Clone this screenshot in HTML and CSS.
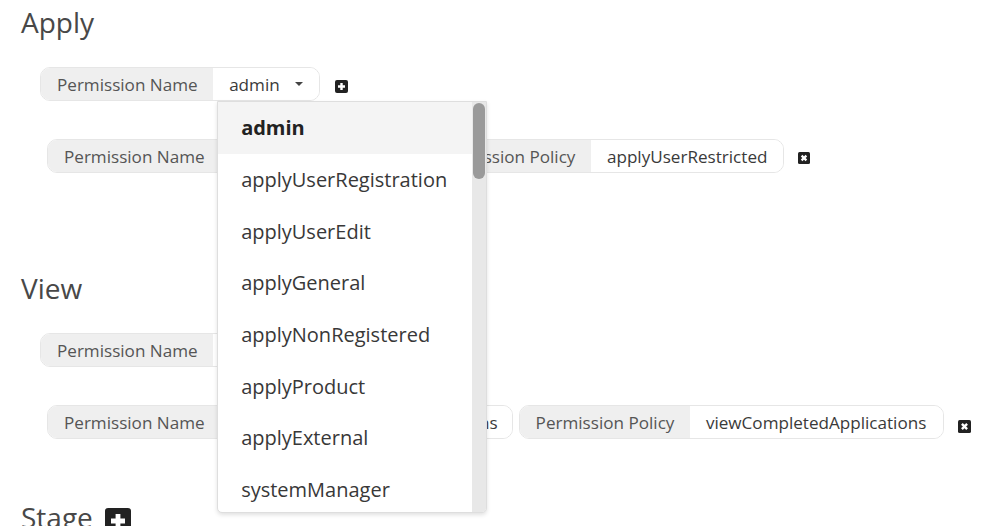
FILE: index.html
```html
<!DOCTYPE html>
<html>
<head>
<meta charset="utf-8">
<link rel="stylesheet" href="styles.css">
</head>
<body>
<section class="section">
  <h2 class="title">Apply</h2>
  <div class="row row-add">
    <div class="field">
      <span class="label">Permission Name</span>
      <div class="value dropdown">
        <span>admin</span><span class="caret"></span>
        <div class="menu">
          <ul class="items">
            <li class="item selected">admin</li>
            <li class="item">applyUserRegistration</li>
            <li class="item">applyUserEdit</li>
            <li class="item">applyGeneral</li>
            <li class="item">applyNonRegistered</li>
            <li class="item">applyProduct</li>
            <li class="item">applyExternal</li>
            <li class="item">systemManager</li>
          </ul>
          <div class="scrollbar"><div class="thumb"></div></div>
        </div>
      </div>
    </div>
    <svg class="icon icon-add" viewBox="0 0 13 13"><rect width="13" height="13" rx="2" fill="#222"/><path d="M6.5 3v7M3 6.5h7" stroke="#fff" stroke-width="2.4"/></svg>
  </div>
  <div class="row row-item">
    <div class="field">
      <span class="label">Permission Name</span>
      <span class="value">applyUserRestricted</span>
    </div>
    <div class="field">
      <span class="label">Permission Policy</span>
      <span class="value">applyUserRestricted</span>
    </div>
    <svg class="icon icon-remove" viewBox="0 0 12 12"><rect width="12" height="12" rx="1.5" fill="#222"/><path d="M3.6 3.6l4.8 4.8M8.4 3.6l-4.8 4.8" stroke="#fff" stroke-width="2.2"/></svg>
  </div>
</section>

<section class="section section-view">
  <h2 class="title">View</h2>
  <div class="row row-add">
    <div class="field">
      <span class="label">Permission Name</span>
      <span class="value">viewGeneral<span class="caret"></span></span>
    </div>
    <svg class="icon icon-add" viewBox="0 0 13 13"><rect width="13" height="13" rx="2" fill="#222"/><path d="M6.5 3v7M3 6.5h7" stroke="#fff" stroke-width="2.4"/></svg>
  </div>
  <div class="row row-item">
    <div class="field">
      <span class="label">Permission Name</span>
      <span class="value value-wide">viewOwnCompletedApplications</span>
    </div>
    <div class="field">
      <span class="label">Permission Policy</span>
      <span class="value value-policy">viewCompletedApplications</span>
    </div>
    <svg class="icon icon-remove icon-remove-far" viewBox="0 0 12 12"><rect width="12" height="12" rx="1.5" fill="#222"/><path d="M3.6 3.6l4.8 4.8M8.4 3.6l-4.8 4.8" stroke="#fff" stroke-width="2.2"/></svg>
  </div>
</section>

<section class="section section-stage">
  <h2 class="title">Stage <svg class="icon icon-title" viewBox="0 0 13 13"><rect width="13" height="13" rx="1.5" fill="#222"/><path d="M6.5 3v7M3 6.5h7" stroke="#fff" stroke-width="2.4"/></svg></h2>
</section>
</body>
</html>
```
FILE: styles.css
```css
html, body {
  height: 100%;
}
body {
  margin: 0;
  padding: 2px 21px 0;
  font-family: "Open Sans", "Noto Sans", sans-serif;
  color: #333;
  background: #fff;
  overflow: hidden;
  box-sizing: border-box;
}
.title {
  margin: 0;
  font-size: 28px;
  line-height: 40px;
  font-weight: 400;
  color: #484848;
  display: flex;
  align-items: center;
  gap: 12px;
}
.section-view {
  margin-top: 95px;
}
.section-stage {
  margin-top: 58px;
}
.row {
  display: flex;
  align-items: center;
}
.row-add {
  margin-top: 25px;
  margin-left: 19px;
}
.row-item {
  margin-top: 38px;
  margin-left: 26px;
  gap: 6px;
}
.field {
  display: flex;
  height: 34px;
  box-sizing: border-box;
  border: 1px solid #e6e6e6;
  border-radius: 10px;
  font-size: 17.1px;
}
.label {
  display: flex;
  align-items: center;
  padding: 0 15.5px 0 16px;
  background: #efefef;
  color: #555;
  border-radius: 9px 0 0 9px;
}
.value {
  display: flex;
  align-items: center;
  padding: 0 16px;
  background: #fff;
  color: #3a3a3a;
  border-radius: 0 9px 9px 0;
}
.value-wide {
  padding-left: 20px;
  padding-right: 14px;
}
.value-policy {
  padding-right: 17px;
}
.caret {
  width: 0;
  height: 0;
  margin-left: 15px;
  border-left: 4px solid transparent;
  border-right: 4px solid transparent;
  border-top: 4px solid #444;
}
.icon {
  display: block;
}
.icon-add {
  width: 13px;
  height: 13px;
  margin-left: 15px;
  margin-top: 5px;
}
.icon-remove {
  width: 12px;
  height: 12px;
  margin-left: 8px;
  margin-top: 4px;
}
.icon-remove-far {
  width: 13px;
  height: 13px;
  margin-top: 8px;
}
.icon-title {
  width: 26px;
  height: 26px;
  margin-top: 8px;
}
.dropdown {
  position: relative;
}
.menu {
  position: absolute;
  top: calc(100% + 1px);
  left: 4px;
  z-index: 10;
  width: 270px;
  height: 412px;
  box-sizing: border-box;
  display: flex;
  background: #fff;
  border: 1px solid #dedede;
  border-radius: 0 0 5px 5px;
  box-shadow: 0 2px 4px rgba(0, 0, 0, 0.12);
  overflow: hidden;
}
.items {
  flex: 1;
  list-style: none;
  margin: 0;
  padding: 0;
}
.item {
  height: 51.7px;
  display: flex;
  align-items: center;
  padding-left: 23px;
  font-size: 20px;
  color: #383838;
}
.item.selected {
  background: #f4f4f4;
  font-weight: 700;
  color: #222;
}
.scrollbar {
  width: 14px;
  background: #e8e8e8;
  padding: 1px 1px 0;
  box-sizing: border-box;
}
.thumb {
  height: 76px;
  border-radius: 6px;
  background: #9a9a9a;
}
```
